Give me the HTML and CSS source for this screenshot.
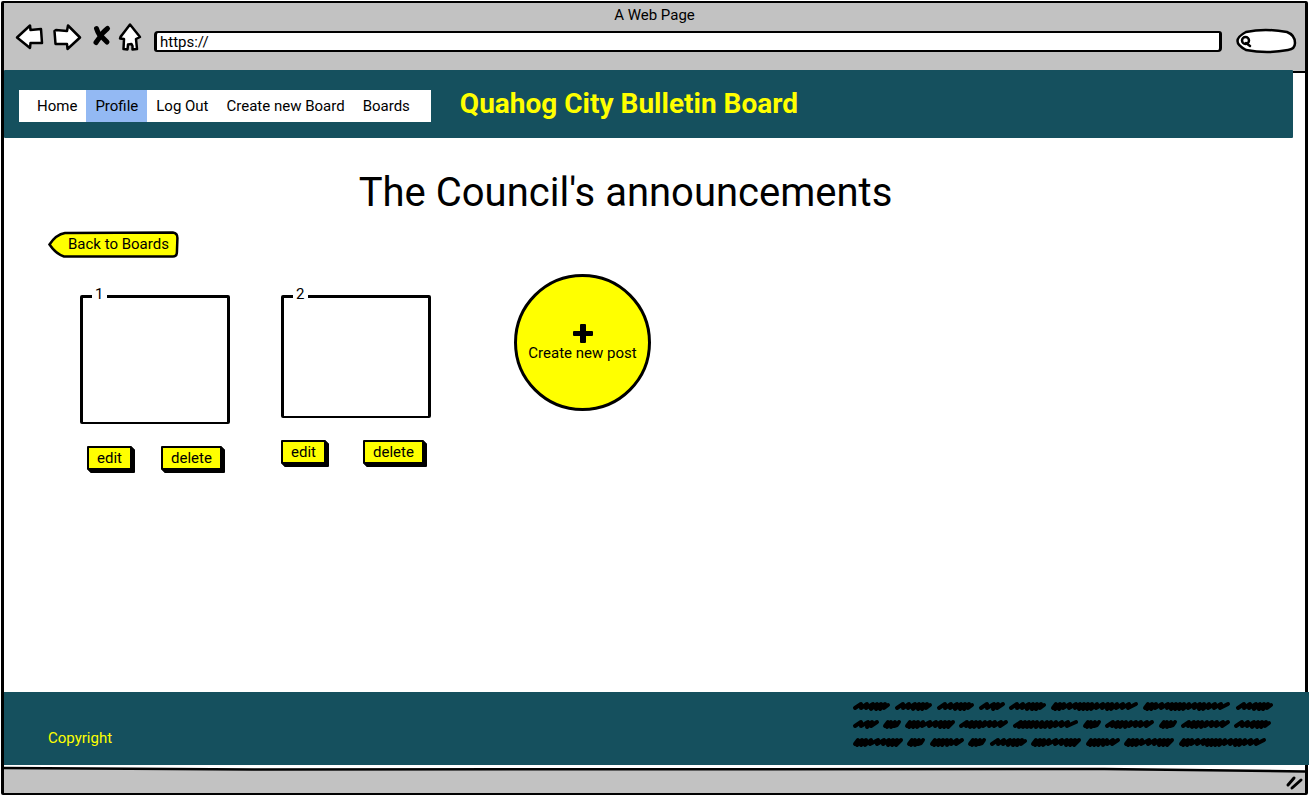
FILE: index.html
```html
<!DOCTYPE html>
<html lang="en">
<head>
<meta charset="utf-8">
<title>Quahog City Bulletin Board</title>
<link rel="stylesheet" href="styles.css">
</head>
<body>
<div class="window">
  <div class="toolbar">
    <div class="window-title">A Web Page</div>
    <div class="toolbar-row">
      <div class="nav-icons">
        <button type="button" class="icon-button" aria-label="Back">
          <svg width="28" height="26" viewBox="0 0 28 26"><path d="M1 13.5 14 1.500 14.500 6 25 5 26 19 14.500 19 14 24Z"/></svg>
        </button>
        <button type="button" class="icon-button" aria-label="Forward">
          <svg width="28" height="26" viewBox="0 0 28 26"><path d="M0.500 7 2 6 13 7 14 1.500 26 13.500 13.500 25 13 20 1.500 20Z"/></svg>
        </button>
        <button type="button" class="icon-button" aria-label="Stop">
          <svg width="18" height="26" viewBox="0 0 18 26"><path class="cross" d="M4.500 4.500Q7 12 10 13Q13 16 15 18M15.500 4.500Q10 9 8 13Q5 17 4 18.500"/></svg>
        </button>
        <button type="button" class="icon-button" aria-label="Home">
          <svg width="22" height="26" viewBox="0 0 22 26"><path d="M10 0.500 20 13 16 15 17 25 12.500 25.500 12.500 22 11.500 20 8 20.500 7.500 25.500 3.500 25 4 15 0 14.500Q0 13 2 11Z"/></svg>
        </button>
      </div>
      <input class="address" type="text" value="https://" aria-label="Address">
      <div class="search">
        <svg class="search-outline" viewBox="0 0 60 26" preserveAspectRatio="none"><path d="M10 4Q29 0 51 4Q59 7 59 15Q59 21 52 22Q31 26 10 22Q-7 13 10 4Z"/><circle cx="9.500" cy="12.500" r="3.500"/><path d="M10 15 14 18"/></svg>
        <input class="search-input" type="text" aria-label="Search">
      </div>
    </div>
  </div>

  <header class="site-header">
    <nav class="menu">
      <a href="#">Home</a>
      <a href="#" class="active">Profile</a>
      <a href="#">Log Out</a>
      <a href="#">Create new Board</a>
      <a href="#">Boards</a>
    </nav>
    <div class="brand">Quahog City Bulletin Board</div>
  </header>

  <main class="content">
    <h1 class="heading">The Council's announcements</h1>
    <a href="#" class="back-link">
      <svg class="back-shape" viewBox="0 0 131 27" preserveAspectRatio="none"><path d="M1.500 13.500Q8 3.500 17 2L125 1.500Q129.500 2 129.500 7L129 21Q129 25.500 125 25.500L16 25.500Q8 23 1.500 13.500Z"/></svg>
      <span class="back-text">Back to Boards</span>
    </a>
    <div class="posts">
      <section class="post">
        <fieldset class="card card-tall"><legend>1</legend></fieldset>
        <div class="actions actions-inset">
          <button type="button" class="action">edit</button>
          <button type="button" class="action">delete</button>
        </div>
      </section>
      <section class="post">
        <fieldset class="card"><legend>2</legend></fieldset>
        <div class="actions">
          <button type="button" class="action">edit</button>
          <button type="button" class="action">delete</button>
        </div>
      </section>
      <button type="button" class="create">
        <svg width="20" height="20" viewBox="0 0 20 20"><path d="M8 1h4q1 0 1 1v6h6q1 0 1 1v3q0 1-1 1h-6v6q0 1-1 1H8q-1 0-1-1v-6H1q-1 0-1-1V9q0-1 1-1h6V2q0-1 1-1Z"/></svg>
        <span>Create new post</span>
      </button>
    </div>
  </main>

  <footer class="site-footer">
    <div class="copyright">Copyright</div>
    <svg class="scribble" width="422" height="47" viewBox="0 0 422 47">
      <defs>
        <path id="w17" d="M2 7 5 3 4 8 8 3 8 8 12 3 11 7 14 6 16 3"/>
        <path id="w25" d="M2 7 8 3 8 7 15 3 14 8 19 3 18 7 24 3"/>
        <path id="w34" d="M2 7 5 3 4 8 9 3 8 8 13 3 12 8 17 3 17 8 21 3 21 7 27 3 26 7 32 3"/>
        <path id="w37" d="M2 7 8 3 8 7 14 3 13 7 20 3 18 8 24 3 23 8 28 3 27 8 32 3 31 7 35 4"/>
        <path id="w49" d="M2 7 8 3 7 7 13 3 11 8 17 3 15 8 21 3 20 8 26 3 24 7 31 3 30 7 36 3 35 7 42 3 41 7 47 3"/>
        <path id="w50" d="M2 7 5 3 4 8 9 3 8 8 13 3 12 8 18 3 17 7 25 3 24 7 31 3 30 7 36 3 35 8 40 3 39 8 44 3 43 8 48 3"/>
        <path id="w65" d="M2 7 8 3 6 8 12 3 10 8 16 3 14 8 20 3 18 8 24 3 23 8 29 3 28 8 34 3 32 8 38 3 37 8 43 3 42 7 49 3 48 7 55 3 54 7 63 3"/>
        <path id="w87" d="M2 7 5 3 4 8 9 3 8 8 13 3 12 7 19 3 18 7 25 3 24 7 29 3 28 8 33 3 32 8 37 3 36 8 41 3 40 8 46 3 45 7 52 3 51 7 57 3 56 8 61 3 60 8 66 3 65 7 72 3 71 7 78 3 77 7 85 3"/>
      </defs>
      <use href="#w37" x="0"/><use href="#w37" x="42"/><use href="#w37" x="84"/><use href="#w25" x="126"/><use href="#w37" x="156"/><use href="#w87" x="198"/><use href="#w87" x="290"/><use href="#w37" x="383"/>
      <use href="#w25" x="0" y="18"/><use href="#w17" x="30" y="18"/><use href="#w50" x="52" y="18"/><use href="#w49" x="106" y="18"/><use href="#w65" x="160" y="18"/><use href="#w17" x="230" y="18"/><use href="#w49" x="252" y="18"/><use href="#w17" x="306" y="18"/><use href="#w49" x="328" y="18"/><use href="#w37" x="381" y="18"/>
      <use href="#w50" x="0" y="36"/><use href="#w17" x="54" y="36"/><use href="#w34" x="77" y="36"/><use href="#w17" x="115" y="36"/><use href="#w37" x="137" y="36"/><use href="#w50" x="178" y="36"/><use href="#w34" x="233" y="36"/><use href="#w50" x="271" y="36"/><use href="#w87" x="326" y="36"/>
    </svg>
  </footer>

  <div class="status-bar">
    <svg class="status-shape" viewBox="0 0 1301 26" preserveAspectRatio="none"><path d="M0 1.500 180 2.500 1100 2 1301 4.500V26H0Z" fill="#c2c2c2"/><path d="M0 1 250 2.500 1100 2 1301 4.500" fill="none" stroke="#000" stroke-width="2.5"/></svg>
    <svg class="grip" width="18" height="14" viewBox="0 0 18 14"><path d="M2 9 8 2M6 12 15 4"/></svg>
  </div>
</div>
</body>
</html>
```
FILE: styles.css
```css
* { box-sizing: border-box; }

body {
  margin: 0;
  padding: 1px;
  background: #fff;
  color: #000;
  font: 15px/20px Roboto, "Liberation Sans", sans-serif;
}

button, input { font: inherit; color: inherit; }

a { color: inherit; text-decoration: none; }

svg { display: block; overflow: visible; }

.window {
  display: flex;
  flex-direction: column;
  min-height: calc(100vh - 2px);
  border: solid #000;
  border-width: 2px 3px;
  border-radius: 2px;
}

.toolbar {
  height: 70px;
  padding-top: 3px;
  background: #c2c2c2;
  border-bottom: 2px solid #000;
}

.window-title {
  line-height: 18px;
  text-align: center;
}

.toolbar-row {
  display: flex;
  align-items: flex-start;
  padding: 0 9px 0 12px;
}

.nav-icons {
  display: flex;
  gap: 10px;
  margin-right: 12px;
}

.icon-button {
  padding: 0;
  border: 0;
  background: none;
}

.icon-button path {
  fill: #fff;
  stroke: #000;
  stroke-width: 2.5;
  stroke-linejoin: round;
}

.icon-button .cross {
  fill: none;
  stroke-width: 5;
  stroke-linecap: round;
}

.address {
  flex: 1;
  min-width: 0;
  height: 21px;
  margin: 7px 14px 0 0;
  padding: 0 3px;
  border: solid #000;
  border-width: 2px 3px;
  border-radius: 4px 3px;
  background: #fff;
}

.search {
  position: relative;
  width: 60px;
  height: 26px;
  margin-top: 4px;
}

.search-outline {
  position: absolute;
  inset: 0;
  width: 100%;
  height: 100%;
  fill: #fff;
  stroke: #000;
  stroke-width: 2.5;
  stroke-linecap: round;
}

.search-input {
  position: relative;
  width: 36px;
  height: 20px;
  margin: 3px 0 0 17px;
  padding: 0;
  border: 0;
  background: none;
}

.site-header {
  position: relative;
  display: flex;
  align-items: flex-start;
  gap: 29px;
  margin: -3px 12px 0 0;
  padding: 20px 15px 16px;
  border-radius: 1px;
  background: #15505e;
}

.menu {
  display: flex;
  padding: 0 12px 0 9px;
  background: #fff;
}

.menu a {
  padding: 0 9px;
  line-height: 32px;
  white-space: nowrap;
}

.menu .active { background: #93b9f3; }

.brand {
  color: #ff0;
  font-size: 28px;
  font-weight: 700;
  line-height: 28px;
}

.content {
  flex: 1;
  padding: 30px 44px;
}

.heading {
  margin: 0 0 13px;
  padding-right: 58px;
  font-size: 40px;
  font-weight: 400;
  line-height: 50px;
  text-align: center;
}

.back-link {
  position: relative;
  display: inline-block;
  padding: 3px 10px 4px 20px;
  vertical-align: top;
}

.back-shape {
  position: absolute;
  inset: 0;
  width: 100%;
  height: 100%;
  fill: #ff0;
  stroke: #000;
  stroke-width: 2.5;
}

.back-text { position: relative; }

.posts {
  display: flex;
  align-items: flex-start;
  padding: 16px 0 0 32px;
}

.post {
  width: 150px;
  margin: 11px 51px 0 0;
}

.card {
  min-width: 0;
  min-height: 133px;
  margin: 0 0 22px;
  padding: 0 9px;
  border: solid #000;
  border-width: 3px 3px 2px;
  border-radius: 2px;
}

.card-tall { min-height: 139px; }

.card legend {
  padding: 0 4px 4px 3px;
  line-height: 18px;
}

.actions {
  display: flex;
  gap: 37px;
}

.actions-inset {
  gap: 29px;
  padding-left: 7px;
}

.action {
  padding: 0 8px;
  border: 2px solid #000;
  border-radius: 1px;
  background: #ff0;
  box-shadow: 1px 1px 0 #000, 2px 2px 0 #000, 3px 3px 0 #000;
}

.create {
  display: flex;
  flex-direction: column;
  align-items: center;
  justify-content: center;
  width: 137px;
  height: 137px;
  margin-left: 32px;
  padding: 0;
  border: 3px solid #000;
  border-radius: 50%;
  background: #ff0;
  white-space: nowrap;
}

.site-footer {
  position: relative;
  display: flex;
  justify-content: space-between;
  align-items: flex-start;
  min-height: 73px;
  margin: 0 -4px 2px 0;
  padding: 9px 34px 17px 44px;
  background: #15505e;
}

.copyright {
  align-self: flex-end;
  color: #ff0;
}

.scribble {
  fill: none;
  stroke: #000;
  stroke-width: 4;
  stroke-linecap: round;
  stroke-linejoin: round;
}

.status-bar {
  position: relative;
  display: flex;
  justify-content: flex-end;
  height: 26px;
  padding: 9px 1px 0;
}

.status-shape {
  position: absolute;
  inset: 0;
  width: 100%;
  height: 100%;
}

.grip {
  position: relative;
  fill: none;
  stroke: #000;
  stroke-width: 3;
  stroke-linecap: round;
}
```
